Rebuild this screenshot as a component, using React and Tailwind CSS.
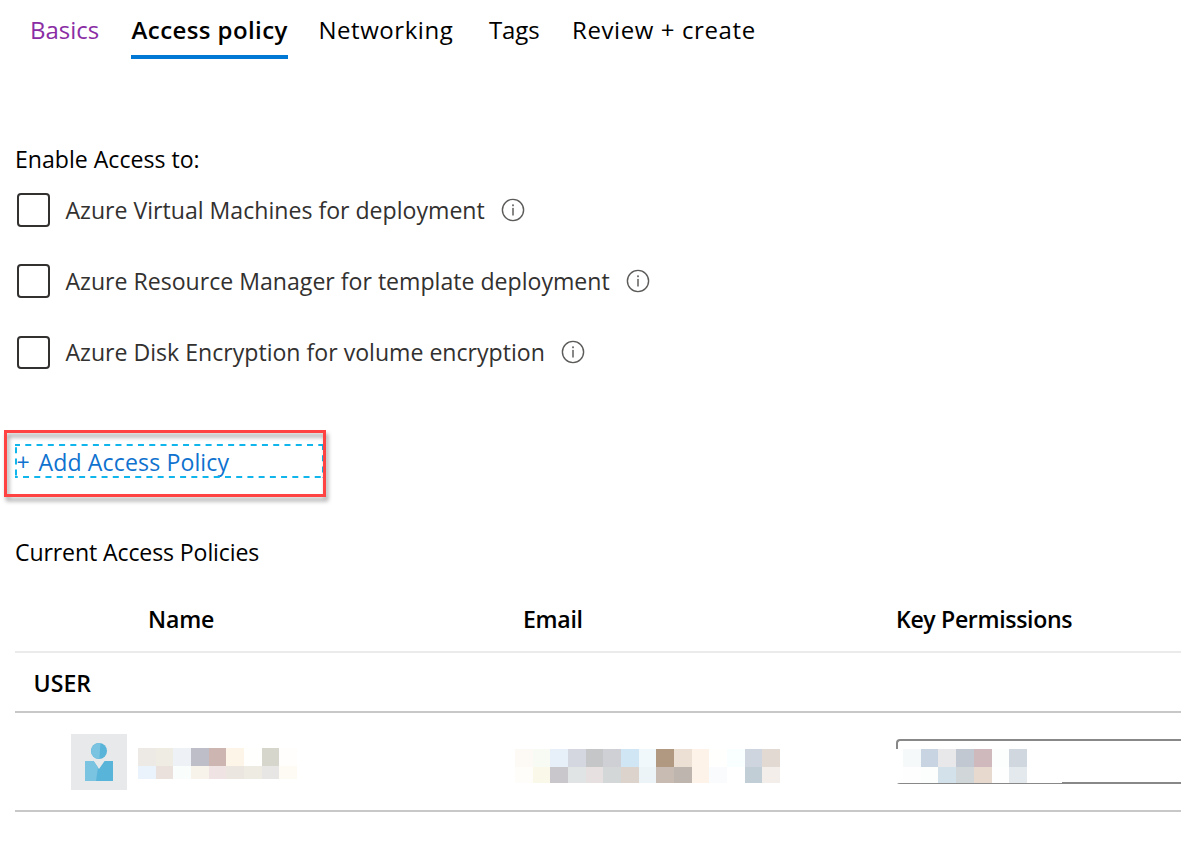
const tabs = [
  { label: "Basics", className: "ml-[30px] w-[101px] text-[#8a2da5]" },
  {
    label: "Access policy",
    className: "w-[157px] mr-[30px] border-b-4 border-[#0078d4] pl-[0.6px] font-semibold tracking-[0.41px]",
  },
  { label: "Networking", className: "w-[171px] pl-[0.4px] tracking-[0.56px]" },
  { label: "Tags", className: "w-[83px] tracking-[-0.15px]" },
  { label: "Review + create", className: "tracking-[0.6px]" },
];

const options = [
  { label: "Azure Virtual Machines for deployment", row: "h-[71px]", box: "h-[34px]" },
  { label: "Azure Resource Manager for template deployment", row: "h-[71px]", box: "h-[34px]" },
  { label: "Azure Disk Encryption for volume encryption", row: "h-[80px]", box: "mt-px h-[33px]" },
];

const maskedName = [
  ["#ede9e5", "#eeece3", "#eef2f6", "#bdbec8", "#cdb5b1", "#fdf5e8", "#fffffe", "#d7d6cd", "#fffefc"],
  ["#eaf3fc", "#eae1dc", "#f9fefd", "#f7f3eb", "#f0e3e3", "#ebe6e0", "#eeebe3", "#e7e6e5", "#fefbf5"],
];

const maskedEmail = [
  ["#fdf9f4", "#f8faf4", "#e7f0f8", "#d4d6e0", "#c5c6c7", "#cfd0d6", "#d0e6f4", "#f0f8fb", "#b09980", "#ecdfd3", "#fdf3e9", "#fffffd", "#f9fffe", "#cfd5de", "#e2d9d2"],
  ["#fefdf9", "#faf8e8", "#cac7cc", "#e0e4e4", "#e7e0e0", "#d3d7d7", "#ddd3cd", "#ecf4f7", "#c7bbb2", "#bfb5af", "#fdf3e9", "#f9fbfd", "#ffffff", "#c2ced6", "#f4eeea"],
];

const maskedKeys = [
  ["#f5f9fa", "#c8d4e1", "#e8e8ea", "#c1c8d1", "#cfb9bc", "#fcfefd", "#d0d7de"],
  ["#fefefe", "#fcfefe", "#d3e1eb", "#d1d6d8", "#e7d9cd", "#fefefe", "#e4e9ed"],
];

function Mosaic({ rows, className }) {
  return (
    <div className={"flex flex-col " + className}>
      {rows.map((row, r) => (
        <div key={r} className={r === 0 ? "flex h-[18px]" : "flex min-h-0 flex-1"}>
          {row.map((color, c) => (
            <span key={c} className="flex-1" style={{ backgroundColor: color }} />
          ))}
        </div>
      ))}
    </div>
  );
}

function InfoIcon() {
  return (
    <svg width="24" height="24" viewBox="0 0 24 24" fill="none" className="shrink-0">
      <circle cx="12" cy="12" r="10.6" stroke="#5c5b5a" strokeWidth="1.4" />
      <rect x="11.2" y="9.9" width="1.6" height="7.6" fill="#6b6a69" />
      <rect x="11.1" y="6.4" width="1.8" height="1.8" fill="#6b6a69" />
    </svg>
  );
}

function UserAvatar() {
  return (
    <svg width="56" height="56" viewBox="0 0 56 56" className="shrink-0">
      <rect width="56" height="56" fill="#e8e9ea" />
      <circle cx="28" cy="17" r="8" fill="#59b4d9" />
      <path d="M29.4 9.1A8 8 0 1 0 28.4 25Z" fill="#7ac3e1" />
      <path d="M14 27h8.6L28 35l5.6-8H42v20H14Z" fill="#59b4d9" />
      <path d="M14 27h8.6L27 33.6 25 47H14Z" fill="#7ac3e1" />
    </svg>
  );
}

function FocusOutline() {
  return (
    <svg
      width="311"
      height="36"
      viewBox="0 0 311 36"
      fill="none"
      stroke="#10b5ec"
      strokeWidth="2"
      className="pointer-events-none absolute top-[13px] left-[11px]"
    >
      <path d="M0 2H309" strokeDasharray="6 5.27" strokeDashoffset="1" />
      <path d="M0 34H309" strokeDasharray="6 5.22" strokeDashoffset="3.2" />
      <path d="M1 1V35" strokeDasharray="6 5.2" strokeDashoffset="8" />
      <path d="M308 3V35" strokeDasharray="6 5.2" strokeDashoffset="2" />
    </svg>
  );
}

export default function App() {
  return (
    <main className="h-[855px] w-[1181px] overflow-hidden bg-white font-['Open_Sans',sans-serif] text-[23.1px] text-black">
      <nav className="flex h-[59px] text-[24px] leading-[60px] whitespace-nowrap">
        {tabs.map((tab) => (
          <div key={tab.label} className={"h-[59px] shrink-0 " + tab.className}>
            {tab.label}
          </div>
        ))}
      </nav>

      <section className="pt-[83px] pl-[15px]">
        <h2 className="h-[51px] leading-[34px]">Enable Access to:</h2>
        <div className="flex flex-col pl-[2px]">
          {options.map((option) => (
            <label key={option.label} className={"flex items-start text-[#323130] " + option.row}>
              <span className={"w-[33px] shrink-0 rounded-[4px] border-2 border-[#323130] " + option.box} />
              <span className="ml-[15.5px] leading-[34px] whitespace-nowrap">{option.label}</span>
              <span className="mt-[5px] ml-[16.5px]">
                <InfoIcon />
              </span>
            </label>
          ))}
        </div>
      </section>

      <div className="pt-[15px] pl-[4px]">
        <div className="relative h-[67px] w-[322px]">
          <FocusOutline />
          <a className="flex h-[64px] pl-[12.5px] leading-[64px] whitespace-nowrap text-[#0f72cf]">
            <span className="w-[22px]">+</span>
            <span className="tracking-[0.12px]">Add Access Policy</span>
          </a>
          <div className="pointer-events-none absolute inset-0 border-[3px] border-[#ff4343] drop-shadow-[2px_4px_2px_rgba(0,0,0,0.38)]" />
        </div>
      </div>

      <section className="pl-[15px]">
        <h2 className="h-[91px] pt-[38px] leading-[34px] tracking-[-0.12px]">Current Access Policies</h2>
        <div className="grid h-[65px] grid-cols-[375px_373px_1fr] border-b-2 border-[#ebebeb] pl-[133px] leading-[62px] font-semibold whitespace-nowrap">
          <span className="tracking-[-0.15px]">Name</span>
          <span className="tracking-[-0.3px]">Email</span>
          <span className="tracking-[-0.34px]">Key Permissions</span>
        </div>
        <div className="h-[60px] border-b-2 border-[#c8c8c8] pl-[18.6px] leading-[61px] font-semibold">USER</div>
        <div className="flex h-[99px] items-start border-b-2 border-[#c8c8c8] pl-[56px]">
          <div className="pt-[21px]">
            <UserAvatar />
          </div>
          <Mosaic rows={maskedName} className="mt-[35px] ml-[11px] h-[31px] w-[159px] shrink-0" />
          <Mosaic rows={maskedEmail} className="mt-[36px] ml-[218px] h-[34px] w-[265px] shrink-0" />
          <div className="relative mt-[26px] ml-[116px] h-[45px] flex-1 rounded-l-[4px] border-y-2 border-l-2 border-[#888888]">
            <div className="absolute top-[8px] left-[-2px] h-[34px] w-[166px] bg-white pl-[7px]">
              <Mosaic rows={maskedKeys} className="h-[34px] w-[124px]" />
            </div>
          </div>
        </div>
      </section>
    </main>
  );
}
